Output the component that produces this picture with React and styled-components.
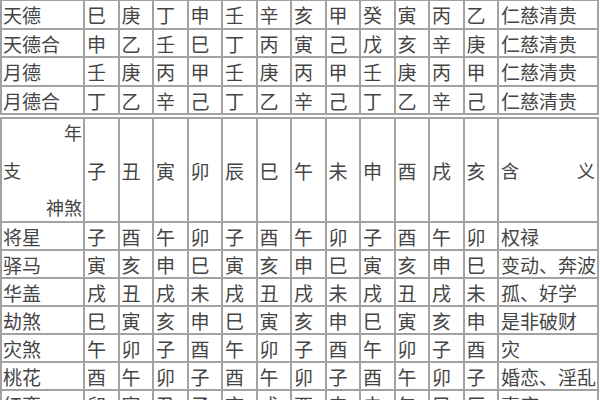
import React from "react";
import styled, { createGlobalStyle } from "styled-components";

const Global = createGlobalStyle`
  html, body { margin: 0; padding: 0; background: #ffffff; }
  body { width: 600px; height: 400px; overflow: hidden; }
`;

const Page = styled.div`
  width: 600px;
  height: 400px;
  overflow: hidden;
  background: #fff;
  font-family: "Noto Sans CJK SC", "Noto Sans", sans-serif;
  color: #454545;
`;

const Table = styled.table`
  width: 597px;
  table-layout: fixed;
  border-collapse: collapse;
  margin-top: ${(p) => p.$top || 0}px;
  border: 2px solid #a2a2a2;
`;

const Row = styled.tr`
  height: ${(p) => p.$h}px;
`;

const Cell = styled.td`
  border: 2px solid #a2a2a2;
  padding: 0 0 0 ${(p) => (p.$pad != null ? p.$pad : 2)}px;
  font-size: 19px;
  line-height: 1;
  white-space: nowrap;
  overflow: hidden;
  vertical-align: middle;
  text-align: left;
`;

const Corner = styled.div`
  height: 98px;
  display: flex;
  flex-direction: column;
  justify-content: space-between;
  font-size: 18px;
  line-height: 1;
  padding: 2px 1px 3px 0;
  box-sizing: border-box;
`;

const CornerLabel = styled.span`
  align-self: ${(p) => (p.$right ? "flex-end" : "flex-start")};
`;

const Meaning = styled.div`
  display: flex;
  justify-content: space-between;
  font-size: 18px;
  padding-right: 2px;
`;

const Gap = styled.div`
  height: 2px;
`;

const top = [
  ["天德", "巳庚丁申壬辛亥甲癸寅丙乙", "仁慈清贵"],
  ["天德合", "申乙壬巳丁丙寅己戊亥辛庚", "仁慈清贵"],
  ["月德", "壬庚丙甲壬庚丙甲壬庚丙甲", "仁慈清贵"],
  ["月德合", "丁乙辛己丁乙辛己丁乙辛己", "仁慈清贵"],
];

const bottom = [
  ["将星", "子酉午卯子酉午卯子酉午卯", "权禄"],
  ["驿马", "寅亥申巳寅亥申巳寅亥申巳", "变动、奔波"],
  ["华盖", "戌丑戌未戌丑戌未戌丑戌未", "孤、好学"],
  ["劫煞", "巳寅亥申巳寅亥申巳寅亥申", "是非破财"],
  ["灾煞", "午卯子酉午卯子酉午卯子酉", "灾"],
  ["桃花", "酉午卯子酉午卯子酉午卯子", "婚恋、淫乱"],
  ["红鸾", "卯寅丑子亥戌酉申未午巳辰", "喜庆"],
];

const Cols = () => (
  <colgroup>
    <col style={{ width: 83 }} />
    {Array.from({ length: 12 }).map((_, i) => (
      <col key={i} style={{ width: 34.5 }} />
    ))}
    <col style={{ width: 100 }} />
  </colgroup>
);

const DataRow = ({ r, h }) => (
  <Row $h={h}>
    <Cell $pad={1}>{r[0]}</Cell>
    {r[1].split("").map((c, i) => (
      <Cell key={i}>{c}</Cell>
    ))}
    <Cell>{r[2]}</Cell>
  </Row>
);

export default function App() {
  return (
    <Page>
      <Global />
      <Table $top={-1}>
        <Cols />
        <tbody>
          {top.map((r, i) => (
            <DataRow key={i} r={r} h={i % 2 === 0 ? 29 : 28} />
          ))}
        </tbody>
      </Table>
      <Gap />
      <Table>
        <Cols />
        <tbody>
          <Row $h={104}>
            <Cell $pad={1}>
              <Corner>
                <CornerLabel $right>年</CornerLabel>
                <CornerLabel>支</CornerLabel>
                <CornerLabel $right>神煞</CornerLabel>
              </Corner>
            </Cell>
            {"子丑寅卯辰巳午未申酉戌亥".split("").map((c, i) => (
              <Cell key={i}>{c}</Cell>
            ))}
            <Cell>
              <Meaning>
                <span>含</span>
                <span>义</span>
              </Meaning>
            </Cell>
          </Row>
          {bottom.map((r, i) => (
            <DataRow key={i} r={r} h={28} />
          ))}
        </tbody>
      </Table>
    </Page>
  );
}
